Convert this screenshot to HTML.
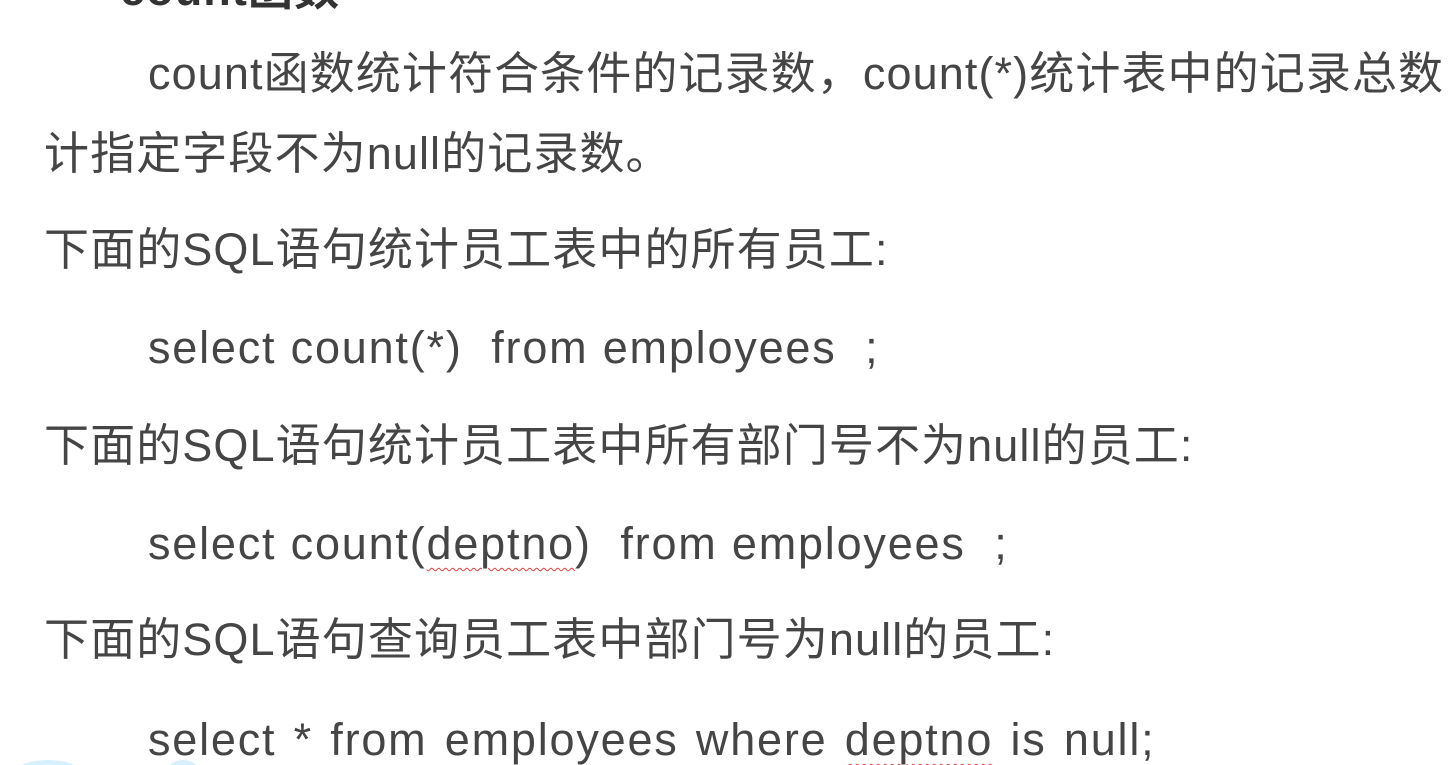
<!DOCTYPE html>
<html><head><meta charset="utf-8"><style>
html,body{margin:0;padding:0;background:#fff;width:1451px;height:765px;overflow:hidden;position:relative}
.l{position:absolute;white-space:nowrap;font-family:"Liberation Sans","Noto Sans CJK SC",sans-serif;font-size:45px;color:#454545;letter-spacing:1.1px;line-height:60px}
.c{letter-spacing:1.8px}
.w{text-decoration:underline wavy #e04040;text-decoration-thickness:1px;text-underline-offset:8px}
</style></head><body>
<div class="l" style="left:120px;top:-40px;font-weight:bold;color:#333">count函数</div>
<div class="l" style="left:148px;top:44px">count函数统计符合条件的记录数，count(*)统计表中的记录总数</div>
<div class="l" style="left:44px;top:124px">计指定字段不为null的记录数。</div>
<div class="l" style="left:44px;top:220px">下面的SQL语句统计员工表中的所有员工:</div>
<div class="l c" style="left:148px;top:318px">select count(*)&nbsp; from employees&nbsp; ;</div>
<div class="l" style="left:44px;top:416px">下面的SQL语句统计员工表中所有部门号不为null的员工:</div>
<div class="l c" style="left:148px;top:514px">select count(<span class="w">deptno</span>)&nbsp; from employees&nbsp; ;</div>
<div class="l" style="left:44px;top:610px">下面的SQL语句查询员工表中部门号为null的员工:</div>
<div class="l c" style="left:148px;top:710px;word-spacing:3px">select * from employees where <span class="w">deptno</span> is null;</div>
<div style="position:absolute;left:18px;top:760px;width:60px;height:20px;border-radius:50%;background:#d8f0fb"></div>
<div style="position:absolute;left:168px;top:760px;width:30px;height:20px;border-radius:50%;background:#d8f0fb"></div>
</body></html>
